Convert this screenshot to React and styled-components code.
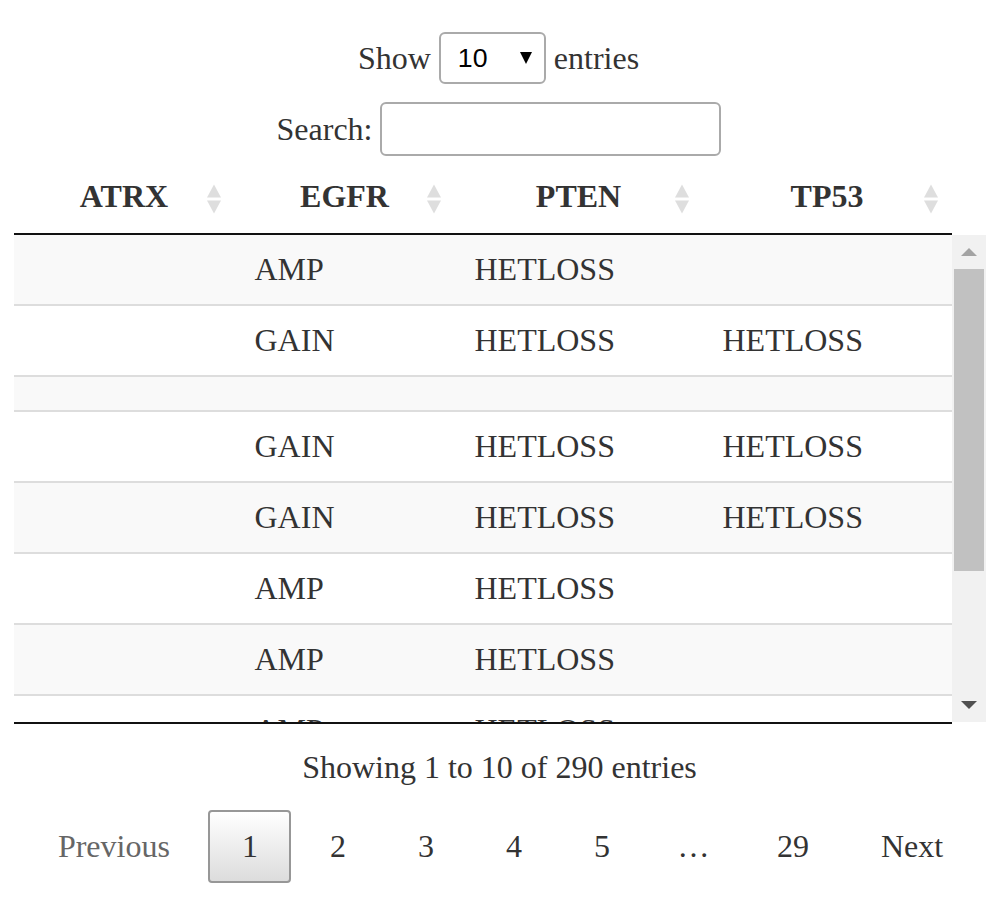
import React from 'react';
import styled, { createGlobalStyle } from 'styled-components';

const GlobalStyle = createGlobalStyle`
  body {
    margin: 0;
    background: #ffffff;
    font-family: "Liberation Serif", "Times New Roman", serif;
    color: #333333;
  }
`

const Wrapper = styled.div`
  width: 972px;
  margin: 0 auto;
  padding-top: 32px;
  font-size: 32px;
`

const ControlRow = styled.div`
  display: flex;
  justify-content: center;
  align-items: center;
  gap: 8px;
  margin-bottom: ${p => p.$mb || 0}px;
  margin-left: ${p => p.$ml || 0}px;
`

const SelectBox = styled.div`
  display: flex;
  align-items: center;
  justify-content: space-between;
  box-sizing: border-box;
  width: 107px;
  height: 52px;
  padding: 0 12px 0 17px;
  border: 2px solid #aaaaaa;
  border-radius: 6px;
  font-family: "Liberation Sans", Arial, sans-serif;
  font-size: 26.7px;
  color: #000;
`

const Caret = styled.span`
  width: 0;
  height: 0;
  border-left: 6px solid transparent;
  border-right: 6px solid transparent;
  border-top: 12px solid #000;
`

const SearchInput = styled.div`
  box-sizing: border-box;
  width: 341px;
  height: 54px;
  border: 2px solid #aaaaaa;
  border-radius: 6px;
  background: #fff;
`

const HeadTable = styled.table`
  width: 938px;
  border-collapse: collapse;
  table-layout: fixed;
  margin-top: 8px;
`

const BodyArea = styled.div`
  display: flex;
  height: 487px;
  border-top: 2px solid #111;
  border-bottom: 2px solid #111;
  width: 938px;
  position: relative;
`

const BodyClip = styled.div`
  width: 938px;
  height: 487px;
  overflow: hidden;
`

const BodyTable = styled.table`
  width: 938px;
  border-collapse: collapse;
  table-layout: fixed;
`

const Th = styled.th`
  position: relative;
  padding: 14px 20px 18px;
  font-weight: bold;
  text-align: center;
  line-height: 37px;
  color: #333;
`

const SortIcon = styled.span`
  position: absolute;
  right: 14px;
  top: 50%;
  transform: translateY(-50%);
  display: flex;
  flex-direction: column;
  gap: 3px;
  &::before, &::after {
    content: "";
    width: 0;
    height: 0;
    border-left: 7px solid transparent;
    border-right: 7px solid transparent;
  }
  &::before { border-bottom: 13px solid #dedede; }
  &::after { border-top: 13px solid #dedede; }
`

const Tr = styled.tr`
  background: ${p => (p.$odd ? '#f9f9f9' : '#ffffff')};
  border-bottom: 2px solid #dddddd;
`

const Td = styled.td`
  padding: 16px 20px;
  line-height: 37px;
  white-space: nowrap;
  overflow: hidden;
`

const EmptyTd = styled.td`
  padding: 0;
  height: 33px;
`

const Scrollbar = styled.div`
  position: absolute;
  left: 938px;
  top: 0;
  width: 34px;
  height: 487px;
  background: #f1f1f1;
  display: flex;
  flex-direction: column;
  align-items: center;
`

const ArrowBtn = styled.div`
  height: 34px;
  width: 100%;
  display: flex;
  align-items: center;
  justify-content: center;
  &::before {
    content: "";
    width: 0;
    height: 0;
    border-left: 8px solid transparent;
    border-right: 8px solid transparent;
    ${p => p.$up
      ? 'border-bottom: 8px solid #a3a3a3;'
      : 'border-top: 8px solid #505050;'}
  }
`

const ThumbTrack = styled.div`
  flex: 1;
  width: 100%;
  display: flex;
  justify-content: center;
`

const Thumb = styled.div`
  width: 30px;
  height: 302px;
  background: #c1c1c1;
`

const Info = styled.div`
  text-align: center;
  line-height: 37px;
  margin-top: 25px;
`

const Pager = styled.div`
  display: flex;
  justify-content: center;
  align-items: center;
  gap: 5px;
  margin-top: 24px;
  margin-left: 2px;
`

const PageBtn = styled.span`
  box-sizing: border-box;
  padding: 16px 31.5px;
  line-height: 37px;
  border: 2px solid ${p => (p.$current ? '#979797' : 'transparent')};
  border-radius: 4px;
  color: ${p => (p.$disabled ? '#666666' : '#333333')};
  background: ${p => (p.$current ? 'linear-gradient(to bottom, #ffffff 0%, #dcdcdc 100%)' : 'transparent')};
`

const Ellipsis = styled.span`
  padding: 0 29px;
  line-height: 37px;
`

const rows = [
  ['', 'AMP', 'HETLOSS', ''],
  ['', 'GAIN', 'HETLOSS', 'HETLOSS'],
  null,
  ['', 'GAIN', 'HETLOSS', 'HETLOSS'],
  ['', 'GAIN', 'HETLOSS', 'HETLOSS'],
  ['', 'AMP', 'HETLOSS', ''],
  ['', 'AMP', 'HETLOSS', ''],
  ['', 'AMP', 'HETLOSS', ''],
  ['', 'GAIN', 'HETLOSS', ''],
  ['', 'AMP', 'HETLOSS', 'HETLOSS'],
]

const widths = [221, 220, 248, 249]
const headers = ['ATRX', 'EGFR', 'PTEN', 'TP53']

const Cols = () => (
  <colgroup>
    {widths.map((w, i) => <col key={i} style={{ width: w }} />)}
  </colgroup>
)

export default function App() {
  return (
    <Wrapper>
      <GlobalStyle />
      <ControlRow $mb={18} $ml={-2}>
        <span>Show</span>
        <SelectBox>
          <span>10</span>
          <Caret />
        </SelectBox>
        <span>entries</span>
      </ControlRow>
      <ControlRow $ml={-1}>
        <span>Search:</span>
        <SearchInput />
      </ControlRow>

      <HeadTable>
        <Cols />
        <thead>
          <tr>
            {headers.map(h => (
              <Th key={h}>{h}<SortIcon /></Th>
            ))}
          </tr>
        </thead>
      </HeadTable>

      <BodyArea>
        <BodyClip>
          <BodyTable>
            <Cols />
            <tbody>
              {rows.map((r, i) =>
                r ? (
                  <Tr key={i} $odd={i % 2 === 0}>
                    {r.map((c, j) => <Td key={j}>{c}</Td>)}
                  </Tr>
                ) : (
                  <Tr key={i} $odd={i % 2 === 0}>
                    <EmptyTd /><EmptyTd /><EmptyTd /><EmptyTd />
                  </Tr>
                )
              )}
            </tbody>
          </BodyTable>
        </BodyClip>
        <Scrollbar>
          <ArrowBtn $up />
          <ThumbTrack><Thumb /></ThumbTrack>
          <ArrowBtn />
        </Scrollbar>
      </BodyArea>

      <Info>Showing 1 to 10 of 290 entries</Info>

      <Pager>
        <PageBtn $disabled>Previous</PageBtn>
        <PageBtn $current>1</PageBtn>
        <PageBtn>2</PageBtn>
        <PageBtn>3</PageBtn>
        <PageBtn>4</PageBtn>
        <PageBtn>5</PageBtn>
        <Ellipsis>…</Ellipsis>
        <PageBtn>29</PageBtn>
        <PageBtn>Next</PageBtn>
      </Pager>
    </Wrapper>
  )
}
